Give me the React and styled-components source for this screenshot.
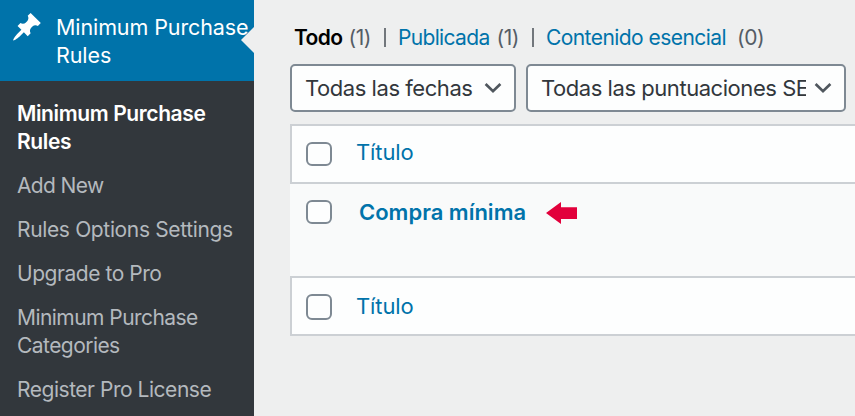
import React from 'react';
import styled, { createGlobalStyle } from 'styled-components';

const submenu = [
  { id: 1, title: 'Minimum Purchase Rules', current: true, spacing: '-0.38px' },
  { id: 2, title: 'Add New', spacing: '-0.65px' },
  { id: 3, title: 'Rules Options Settings', spacing: '-0.35px' },
  { id: 4, title: 'Upgrade to Pro', spacing: '-0.45px' },
  { id: 5, title: 'Minimum Purchase Categories', spacing: '-0.55px' },
  { id: 6, title: 'Register Pro License', spacing: '-0.47px' },
];

function Chevron() {
  return (
    <svg width="18" height="12" viewBox="0 0 18 12" fill="none">
      <path d="M1.6 2L9 9.2L16.4 2" stroke="#50575e" strokeWidth="2.7" />
    </svg>
  );
}

function Sidebar() {
  return (
    <SidebarStyled>
      <MenuHead>
        <PinIcon viewBox="0 0 20 20">
          <path d="M10.44 3.02l1.82-1.82 6.36 6.35-1.83 1.82c-1.05-.68-2.48-.57-3.41.36l-.75.75c-.92.93-1.04 2.35-.35 3.41l-1.83 1.82-2.41-2.41-2.8 2.79c-.42.42-3.38 2.71-3.8 2.29s1.86-3.39 2.28-3.81l2.79-2.79L4.1 9.36l1.83-1.82c1.05.69 2.48.57 3.4-.36l.75-.75c.93-.92 1.05-2.35.36-3.41z" />
        </PinIcon>
        <span>Minimum Purchase Rules</span>
      </MenuHead>
      <Submenu>
        {submenu.map((item) => (
          <SubmenuItem key={item.id} $current={item.current} $spacing={item.spacing}>
            {item.title}
          </SubmenuItem>
        ))}
      </Submenu>
    </SidebarStyled>
  );
}

function App() {
  return (
    <Page>
      <GlobalStyle />
      <Sidebar />
      <Content>
        <Views>
          <CurrentView>Todo</CurrentView>
          <Count>(1)</Count>
          <Divider />
          <ViewLink $spacing="-0.65px">Publicada</ViewLink>
          <Count $gap="7px">(1)</Count>
          <Divider />
          <ViewLink $spacing="-0.55px">Contenido esencial</ViewLink>
          <Count $gap="11px">(0)</Count>
        </Views>
        <Filters>
          <Select $width="226px">
            <span>Todas las fechas</span>
            <Chevron />
          </Select>
          <Select $width="320px">
            <span>Todas las puntuaciones SEO</span>
            <Chevron />
          </Select>
        </Filters>
        <Table>
          <HeadRow>
            <Checkbox $height="24px" />
            <ColumnLink $lineHeight="21px">Título</ColumnLink>
          </HeadRow>
          <PostRow>
            <Checkbox $height="24px" />
            <PostTitle>Compra mínima</PostTitle>
            <Arrow viewBox="0 0 32 22">
              <path d="M0 11L15 0V5.3H31V17H15V22Z" />
            </Arrow>
          </PostRow>
          <HeadRow>
            <Checkbox $height="26px" />
            <ColumnLink $lineHeight="25px">Título</ColumnLink>
          </HeadRow>
        </Table>
      </Content>
    </Page>
  );
}

const GlobalStyle = createGlobalStyle`
  * {
    box-sizing: border-box;
  }

  body {
    margin: 0;
    overflow: hidden;
    background: #eeefef;
    font-family: Inter, 'Liberation Sans', sans-serif;
  }
`;

const Page = styled.div`
  display: flex;
  height: 416px;
  overflow: hidden;
`;

const SidebarStyled = styled.nav`
  width: 254px;
  flex: none;
  background: #32373c;
  font-size: 21px;
  line-height: 28px;
`;

const MenuHead = styled.div`
  position: relative;
  display: flex;
  height: 81px;
  padding: 13px 0 0 11px;
  background: #0073aa;
  color: #fff;
  font-size: 21.5px;
  letter-spacing: -0.1px;

  span {
    width: 198px;
    margin-left: 13px;
  }

  &::after {
    content: '';
    position: absolute;
    right: 0;
    top: 27px;
    border: 13px solid transparent;
    border-left-width: 0;
    border-right-color: #eeefef;
  }
`;

const PinIcon = styled.svg`
  width: 32px;
  height: 32px;
  flex: none;
  margin-top: -2px;
  fill: #fff;
`;

const Submenu = styled.ul`
  display: flex;
  flex-direction: column;
  gap: 16px;
  margin: 0;
  padding: 19px 12px 0 17px;
  list-style: none;
`;

const SubmenuItem = styled.li`
  color: ${(props) => (props.$current ? '#fff' : '#b4b9be')};
  font-weight: ${(props) => (props.$current ? 600 : 400)};
  letter-spacing: ${(props) => props.$spacing};
`;

const Content = styled.main`
  flex: 1;
  min-width: 0;
  padding: 23px 0 0 36px;
`;

const Views = styled.div`
  display: flex;
  align-items: center;
  height: 28px;
  padding-left: 4px;
  font-size: 21px;
  white-space: nowrap;
`;

const CurrentView = styled.span`
  color: #000;
  font-weight: 600;
  letter-spacing: -0.6px;
`;

const Count = styled.span`
  margin-left: ${(props) => props.$gap || '6px'};
  color: #555d66;
  letter-spacing: -0.5px;
`;

const Divider = styled.span`
  width: 2px;
  height: 19px;
  margin: 0 12px 0 13px;
  background: #72777c;
`;

const ViewLink = styled.a`
  color: #0073aa;
  letter-spacing: ${(props) => props.$spacing};
`;

const Filters = styled.div`
  display: flex;
  gap: 10px;
  margin-top: 13px;
`;

const Select = styled.div`
  display: flex;
  align-items: center;
  gap: 8px;
  width: ${(props) => props.$width};
  height: 48px;
  padding: 0 12px 0 13px;
  border: 2px solid #7e8993;
  border-radius: 5px;
  background: #fdfefe;
  color: #32373c;
  font-size: 22px;
  letter-spacing: -0.45px;

  span {
    flex: 1;
    overflow: hidden;
    white-space: nowrap;
  }

  svg {
    flex: none;
  }
`;

const Table = styled.div`
  margin-top: 12px;
`;

const HeadRow = styled.div`
  display: flex;
  height: 60px;
  padding: 16px 0 0 14px;
  border: 2px solid #ccd0d4;
  border-right: 0;
  background: #fdfefe;
`;

const PostRow = styled.div`
  display: flex;
  height: 92px;
  padding: 16px 0 0 16px;
  background: #f9fafa;
`;

const Checkbox = styled.span`
  flex: none;
  width: 26px;
  height: ${(props) => props.$height};
  border: 2px solid #7e8993;
  border-radius: 6px;
  background: #fdfefe;
`;

const ColumnLink = styled.a`
  margin-left: 24px;
  color: #0073aa;
  font-size: 22px;
  letter-spacing: -0.1px;
  line-height: ${(props) => props.$lineHeight};
`;

const PostTitle = styled.a`
  margin-left: 27px;
  color: #0073aa;
  font-size: 22px;
  font-weight: 600;
  line-height: 25px;
`;

const Arrow = styled.svg`
  width: 32px;
  height: 22px;
  margin: 2px 0 0 20px;
  fill: #e2003b;
`;

export default App;
